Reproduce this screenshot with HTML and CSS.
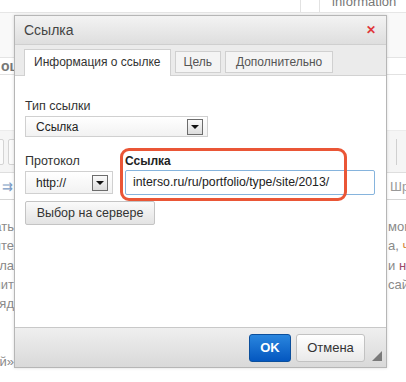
FILE: index.html
```html
<!DOCTYPE html>
<html lang="ru">
<head>
  <meta charset="UTF-8">
  <title>Ссылка</title>
  <link rel="stylesheet" href="styles.css">
</head>
<body>
  <div class="page">
    <div class="page-top">
      <div class="top-box"></div>
      <div class="top-tab">information</div>
    </div>
    <div class="page-head"></div>
    <div class="page-section"><span class="section-name">оценка</span></div>
    <div class="page-gap"></div>
    <div class="page-toolbar">
      <div class="tb-left"><span class="tb-btn"></span><span class="tb-btn"></span></div>
      <div class="tb-right"><span class="tb-sep"></span></div>
    </div>
    <div class="page-format">
      <div class="fmt-left">⇉</div>
      <div class="fmt-right">Шрифт</div>
    </div>
    <div class="page-text">
      <div class="line"><span class="l">писать</span><span class="r">могут с</span></div>
      <div class="line"><span class="l">сайте</span><span class="r">а, <em class="o">ч</em></span></div>
      <div class="line"><span class="l">дела</span><span class="r">и <em class="p">н</em></span></div>
      <div class="line"><span class="l">хранит</span><span class="r">сайт</span></div>
      <div class="line"><span class="l">выгляд</span><span class="r"></span></div>
      <div class="line"></div>
      <div class="line"></div>
      <div class="line"><span class="l">ссылкой»</span><span class="r"></span></div>
    </div>
  </div>

  <div class="dialog">
    <div class="dialog-title">
      <span>Ссылка</span>
      <span class="close">✕</span>
    </div>
    <div class="tabs">
      <div class="tab active">Информация о ссылке</div>
      <div class="tab">Цель</div>
      <div class="tab tab-wide">Дополнительно</div>
    </div>
    <div class="dialog-body">
      <div class="field">
        <label>Тип ссылки</label>
        <div class="select select-type">
          <span>Ссылка</span>
          <span class="arrow"></span>
        </div>
      </div>
      <div class="row">
        <div class="field">
          <label>Протокол</label>
          <div class="select select-proto">
            <span>http://</span>
            <span class="arrow"></span>
          </div>
        </div>
        <div class="field">
          <label class="bold">Ссылка</label>
          <div class="input">interso.ru/ru/portfolio/type/site/2013/</div>
        </div>
      </div>
      <button class="btn-browse">Выбор на сервере</button>
    </div>
    <div class="dialog-footer">
      <button class="btn-ok">OK</button>
      <button class="btn-cancel">Отмена</button>
      <span class="resize"></span>
    </div>
  </div>

  <div class="highlight"></div>
</body>
</html>
```

FILE: styles.css
```css
* {
  box-sizing: border-box;
  margin: 0;
  padding: 0;
}
body, html {
  font-family: 'Liberation Sans', Arial, sans-serif;
  background-color: #ffffff;
  width: 406px;
  height: 382px;
  overflow: hidden;
}

/* page behind the dialog */
.page {
  width: 406px;
  height: 382px;
  background-color: #ffffff;
}
.page-top {
  height: 13px;
  border-bottom: 1px solid #e6e6e6;
  display: flex;
  justify-content: flex-end;
  align-items: flex-end;
}
.top-box {
  width: 20px;
  height: 13px;
  border-left: 1px solid #e2e2e2;
  border-right: 1px solid #e2e2e2;
  margin-right: 8px;
}
.top-tab {
  width: 78px;
  height: 13px;
  font-size: 13px;
  line-height: 6px;
  color: #777;
  overflow: hidden;
  padding-left: 4px;
}
.page-head {
  height: 45px;
  background-color: #f9f9f9;
  border-bottom: 1px solid #e4e4e4;
}
.page-section {
  height: 17px;
  border-bottom: 1px solid #e2e2e2;
  overflow: hidden;
}
.section-name {
  display: block;
  width: 14px;
  overflow: hidden;
  white-space: nowrap;
  font-size: 14px;
  font-weight: bold;
  color: #777;
  line-height: 17px;
  padding-left: 1px;
}
.page-gap {
  height: 56px;
  border-bottom: 1px solid #ececec;
}
.page-toolbar {
  height: 42px;
  background-color: #f5f5f5;
  border-bottom: 1px solid #dedede;
  display: flex;
  justify-content: space-between;
  align-items: center;
}
.tb-left {
  display: flex;
  gap: 4px;
  margin-left: -4px;
}
.tb-btn {
  width: 8px;
  height: 26px;
  border: 1px solid #d4d4d4;
  border-radius: 2px;
  background-color: #fbfbfb;
}
.tb-right {
  width: 20px;
  height: 26px;
  display: flex;
  justify-content: center;
}
.tb-sep {
  width: 1px;
  height: 26px;
  background-color: #d0d0d0;
}
.page-format {
  height: 27px;
  border-bottom: 1px solid #d6d6d6;
  display: flex;
  justify-content: space-between;
  align-items: center;
}
.fmt-left {
  font-size: 13px;
  color: #7a9bc4;
  padding-left: 2px;
}
.fmt-right {
  width: 16px;
  overflow: hidden;
  white-space: nowrap;
  font-size: 13px;
  color: #999;
}
.page-text {
  padding-top: 17px;
}
.line {
  height: 19.3px;
  display: flex;
  justify-content: space-between;
  font-size: 13px;
  line-height: 19px;
  color: #8a8a8a;
}
.line .l {
  width: 14px;
  display: flex;
  justify-content: flex-end;
  overflow: hidden;
  white-space: nowrap;
}
.line .r {
  width: 18px;
  overflow: hidden;
  white-space: nowrap;
}
.line em {
  font-style: normal;
}
.line .o {
  color: #d4883a;
}
.line .p {
  color: #9a4a6a;
}

/* dialog */
.dialog {
  position: absolute;
  left: 14px;
  top: 15px;
  width: 373px;
  height: 353px;
  border: 1px solid #b6b6b6;
  background-color: #ffffff;
  display: flex;
  flex-direction: column;
  box-shadow: 0 0 3px rgba(0, 0, 0, 0.15);
}
.dialog-title {
  height: 29px;
  padding: 0 10px 0 9px;
  display: flex;
  justify-content: space-between;
  align-items: center;
  font-size: 14px;
  color: #444;
  background: linear-gradient(#f3f3f3, #dedede);
  border-bottom: 1px solid #cfcfcf;
}
.close {
  color: #e0383a;
  font-size: 12px;
  font-weight: bold;
}
.tabs {
  height: 31px;
  background-color: #ebebeb;
  display: flex;
  align-items: flex-end;
  gap: 4px;
  padding-left: 9px;
  border-bottom: 1px solid #d2d2d2;
}
.tab {
  height: 22px;
  margin-bottom: 2px;
  padding: 0 8px;
  font-size: 12px;
  line-height: 21px;
  color: #555;
  background-color: #f4f4f4;
  border: 1px solid #d0d0d0;
}
.tab-wide {
  padding: 0 10px;
}
.tab.active {
  height: 27px;
  margin-bottom: -1px;
  padding: 0 9px;
  line-height: 25px;
  color: #333;
  background-color: #ffffff;
  border-bottom: none;
}
.dialog-body {
  flex-grow: 1;
  padding: 23px 10px 0 10px;
  font-size: 12px;
  color: #333;
}
.field label {
  display: block;
  font-size: 12.5px;
  line-height: 15px;
  margin-bottom: 2px;
}
.field label.bold {
  font-size: 12px;
  font-weight: bold;
  color: #222;
}
.select {
  height: 21px;
  border: 1px solid #d0d0d0;
  background: linear-gradient(#ffffff, #f2f2f2);
  display: flex;
  justify-content: space-between;
  align-items: center;
  padding: 0 4px 0 10px;
  color: #222;
}
.select-type {
  width: 183px;
}
.select-proto {
  width: 88px;
  height: 23px;
}
.arrow {
  width: 16px;
  height: 16px;
  border: 1px solid #6c6c6c;
  background: linear-gradient(#fafafa, #dcdcdc);
  position: relative;
}
.arrow::after {
  content: "";
  position: absolute;
  left: 3px;
  top: 5px;
  border-left: 4px solid transparent;
  border-right: 4px solid transparent;
  border-top: 4px solid #111;
}
.row {
  display: flex;
  gap: 12px;
  margin-top: 17px;
}
.input {
  width: 250px;
  height: 25px;
  margin-top: -1px;
  border: 1px solid #86b4dd;
  border-radius: 2px;
  padding-left: 7px;
  line-height: 23px;
  font-size: 12.3px;
  color: #222;
  white-space: nowrap;
}
.btn-browse {
  margin-top: 6px;
  width: 130px;
  height: 24px;
  font-family: 'Liberation Sans', Arial, sans-serif;
  font-size: 12.5px;
  color: #333;
  border: 1px solid #c4c4c4;
  border-radius: 2px;
  background: linear-gradient(#fafafa, #e3e3e3);
}
.dialog-footer {
  height: 40px;
  border-top: 1px solid #c8c8c8;
  background: linear-gradient(#efefef, #d9d9d9);
  display: flex;
  justify-content: flex-end;
  align-items: center;
  gap: 5px;
  padding-right: 21px;
  position: relative;
}
.btn-ok, .btn-cancel {
  height: 28px;
  font-family: 'Liberation Sans', Arial, sans-serif;
  font-size: 13px;
  border-radius: 3px;
}
.btn-ok {
  width: 42px;
  color: #ffffff;
  font-weight: bold;
  border: 1px solid #0b4f9c;
  background: linear-gradient(#2a86de, #0457c0);
}
.btn-cancel {
  width: 69px;
  color: #333;
  border: 1px solid #c2c2c2;
  background: linear-gradient(#ffffff, #e9e9e9);
}
.resize {
  position: absolute;
  right: 4px;
  bottom: 6px;
  width: 0;
  height: 0;
  border-left: 10px solid transparent;
  border-bottom: 10px solid #7a7a7a;
}

/* annotation */
.highlight {
  position: absolute;
  left: 120px;
  top: 148px;
  width: 227px;
  height: 53px;
  border: 3px solid #ea5636;
  border-radius: 9px;
}
```
